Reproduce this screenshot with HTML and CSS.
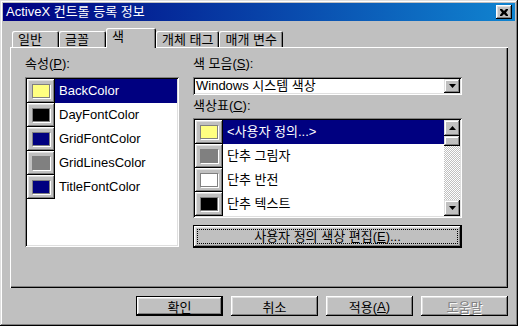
FILE: index.html
```html
<!DOCTYPE html>
<html lang="ko">
<head>
    <meta charset="UTF-8">
    <title>ActiveX 컨트롤 등록 정보</title>
    <link rel="stylesheet" href="styles.css">
</head>
<body>
    <div class="window">
        <div class="titlebar">
            <span class="title">ActiveX 컨트롤 등록 정보</span>
            <span class="close-btn">
                <svg width="8" height="7" viewBox="0 0 8 7"><path d="M0 0h2l2 2 2-2h2v1L6 3.5 8 6v1H6L4 5 2 7H0V6l2-2.5L0 1z" fill="#000"/></svg>
            </span>
        </div>

        <div class="content">
            <div class="tabs">
                <div class="tab">일반</div>
                <div class="tab">글꼴</div>
                <div class="tab active">색</div>
                <div class="tab">개체 태그</div>
                <div class="tab">매개 변수</div>
            </div>

            <div class="panel">
                <!-- 왼쪽: 속성 목록 -->
                <div class="col">
                    <div class="label">속성(<u>P</u>):</div>
                    <div class="listbox props">
                        <div class="item selected"><span class="swatch"><i class="c-yellow"></i></span><span class="name">BackColor</span></div>
                        <div class="item"><span class="swatch"><i class="c-black"></i></span><span class="name">DayFontColor</span></div>
                        <div class="item"><span class="swatch"><i class="c-navy"></i></span><span class="name">GridFontColor</span></div>
                        <div class="item"><span class="swatch"><i class="c-gray"></i></span><span class="name">GridLinesColor</span></div>
                        <div class="item"><span class="swatch"><i class="c-navy"></i></span><span class="name">TitleFontColor</span></div>
                    </div>
                </div>

                <!-- 오른쪽: 색 모음 / 색상표 -->
                <div class="col">
                    <div class="label">색 모음(<u>S</u>):</div>
                    <div class="combo">
                        <span class="combo-text">Windows 시스템 색상</span>
                        <span class="arrow-btn">
                            <svg width="7" height="4" viewBox="0 0 7 4"><polygon points="0,0 7,0 3.5,4" fill="#000"/></svg>
                        </span>
                    </div>
                    <div class="label label-gap">색상표(<u>C</u>):</div>
                    <div class="listbox palette">
                        <div class="palette-items">
                            <div class="item selected"><span class="swatch"><i class="c-yellow"></i></span><span class="name">&lt;사용자 정의...&gt;</span></div>
                            <div class="item"><span class="swatch"><i class="c-gray"></i></span><span class="name">단추 그림자</span></div>
                            <div class="item"><span class="swatch"><i class="c-white"></i></span><span class="name">단추 반전</span></div>
                            <div class="item"><span class="swatch"><i class="c-black"></i></span><span class="name">단추 텍스트</span></div>
                        </div>
                        <div class="scrollbar">
                            <span class="arrow-btn">
                                <svg width="7" height="4" viewBox="0 0 7 4"><polygon points="3.5,0 7,4 0,4" fill="#000"/></svg>
                            </span>
                            <span class="thumb"></span>
                            <span class="track"></span>
                            <span class="arrow-btn">
                                <svg width="7" height="4" viewBox="0 0 7 4"><polygon points="0,0 7,0 3.5,4" fill="#000"/></svg>
                            </span>
                        </div>
                    </div>
                    <div class="btn default wide"><span class="focus">사용자 정의 색상 편집(<u>E</u>)...</span></div>
                </div>
            </div>

            <div class="actions">
                <div class="btn default">확인</div>
                <div class="btn">취소</div>
                <div class="btn">적용(<u>A</u>)</div>
                <div class="btn disabled">도움말</div>
            </div>
        </div>
    </div>
</body>
</html>
```

FILE: styles.css
```css
body {
    margin: 0;
    background-color: #c0c0c0;
    font-family: "Liberation Sans", "Noto Sans CJK KR", sans-serif;
    font-size: 13px;
    color: #000;
}

.window {
    width: 518px;
    height: 326px;
    box-sizing: border-box;
    padding: 3px;
    background-color: #c0c0c0;
    box-shadow: inset -1px -1px #000, inset 1px 1px #dfdfdf,
                inset -2px -2px #808080, inset 2px 2px #fff;
}

.titlebar {
    height: 18px;
    display: flex;
    align-items: center;
    justify-content: space-between;
    padding: 0 3px 0 3px;
    background: linear-gradient(90deg, #000080, #1084d0);
    color: white;
}

.title {
    line-height: 18px;
}

.close-btn {
    width: 16px;
    height: 14px;
    display: flex;
    align-items: center;
    justify-content: center;
    background-color: #c0c0c0;
    box-shadow: inset -1px -1px #000, inset 1px 1px #fff,
                inset -2px -2px #808080, inset 2px 2px #dfdfdf;
}

.content {
    padding: 7px 7px 0 7px;
}

/* 탭 */
.tabs {
    display: flex;
    align-items: flex-end;
    height: 19px;
    padding-left: 2px;
}

.tab {
    position: relative;
    height: 16px;
    min-width: 47px;
    box-sizing: border-box;
    padding: 0 6px;
    line-height: 17px;
    border-radius: 2px 2px 0 0;
    box-shadow: inset 1px 1px #fff, inset -1px 0 #000, inset -2px 0 #808080;
}

.tab.active {
    height: 20px;
    min-width: 50px;
    margin-bottom: -1px;
    line-height: 17px;
    z-index: 1;
    background-color: #c0c0c0;
    box-shadow: inset 1px 1px #fff, inset -1px 0 #000, inset -2px 0 #808080;
}

.panel {
    height: 241px;
    box-sizing: border-box;
    padding: 9px 0 0 15px;
    display: grid;
    grid-template-columns: 154px 269px;
    column-gap: 14px;
    align-items: start;
    box-shadow: inset 1px 1px #fff, inset -1px -1px #000, inset -2px -2px #808080;
}

.col {
    display: flex;
    flex-direction: column;
}

.label {
    height: 15px;
    line-height: 15px;
    margin-bottom: 6px;
}

.label-gap {
    margin-top: 3px;
    margin-bottom: 5px;
}

/* 목록 */
.listbox {
    box-sizing: border-box;
    padding: 2px;
    background-color: white;
    box-shadow: inset 1px 1px #808080, inset -1px -1px #fff,
                inset 2px 2px #000, inset -2px -2px #dfdfdf;
}

.props {
    height: 170px;
}

.palette {
    height: 100px;
    display: flex;
}

.palette-items {
    flex: 1;
}

.item {
    display: flex;
    height: 24px;
}

.swatch {
    width: 28px;
    height: 24px;
    flex-shrink: 0;
    display: flex;
    align-items: center;
    justify-content: center;
    background-color: #c0c0c0;
    box-shadow: inset -1px -1px #000, inset 1px 1px #fff,
                inset -2px -2px #808080, inset 2px 2px #dfdfdf;
}

.swatch i {
    width: 16px;
    height: 12px;
    border: 1px solid #808080;
    box-shadow: 1px 1px 0 #fff;
}

.name {
    flex: 1;
    padding-left: 4px;
    line-height: 24px;
    white-space: nowrap;
}

.item.selected .name {
    background-color: #000080;
    color: white;
}

.c-yellow { background-color: #ffff80; }
.c-black { background-color: #000; }
.c-navy { background-color: #000080; }
.c-gray { background-color: #808080; }
.c-white { background-color: #fff; }

/* 콤보 상자 */
.combo {
    height: 18px;
    box-sizing: border-box;
    padding: 2px;
    display: flex;
    background-color: white;
    box-shadow: inset 1px 1px #808080, inset -1px -1px #fff,
                inset 2px 2px #000, inset -2px -2px #dfdfdf;
}

.combo-text {
    flex: 1;
    padding-left: 1px;
    line-height: 14px;
}

.arrow-btn {
    width: 16px;
    height: 14px;
    display: flex;
    align-items: center;
    justify-content: center;
    background-color: #c0c0c0;
    box-shadow: inset -1px -1px #000, inset 1px 1px #dfdfdf,
                inset -2px -2px #808080, inset 2px 2px #fff;
}

.scrollbar {
    width: 16px;
    display: flex;
    flex-direction: column;
}

.scrollbar .arrow-btn {
    height: 16px;
}

.thumb {
    height: 10px;
    background-color: #c0c0c0;
    box-shadow: inset -1px -1px #000, inset 1px 1px #dfdfdf,
                inset -2px -2px #808080, inset 2px 2px #fff;
}

.track {
    flex: 1;
    background: repeating-conic-gradient(#c0c0c0 0 25%, #fff 0 50%) 0 0 / 2px 2px;
}

/* 단추 */
.btn {
    width: 87px;
    height: 20px;
    box-sizing: border-box;
    display: flex;
    align-items: center;
    justify-content: center;
    background-color: #c0c0c0;
    box-shadow: inset -1px -1px #000, inset 1px 1px #fff,
                inset -2px -2px #808080, inset 2px 2px #dfdfdf;
}

.btn.default {
    border: 1px solid #000;
}

.btn.wide {
    width: 269px;
    height: 23px;
    margin-top: 7px;
    padding: 3px;
}

.focus {
    flex: 1;
    align-self: stretch;
    border: 1px dotted #000;
    text-align: center;
    line-height: 13px;
}

.btn.disabled {
    color: #808080;
    text-shadow: 1px 1px 0 #fff;
}

.actions {
    display: flex;
    justify-content: flex-end;
    gap: 8px;
    margin-top: 8px;
}
```
